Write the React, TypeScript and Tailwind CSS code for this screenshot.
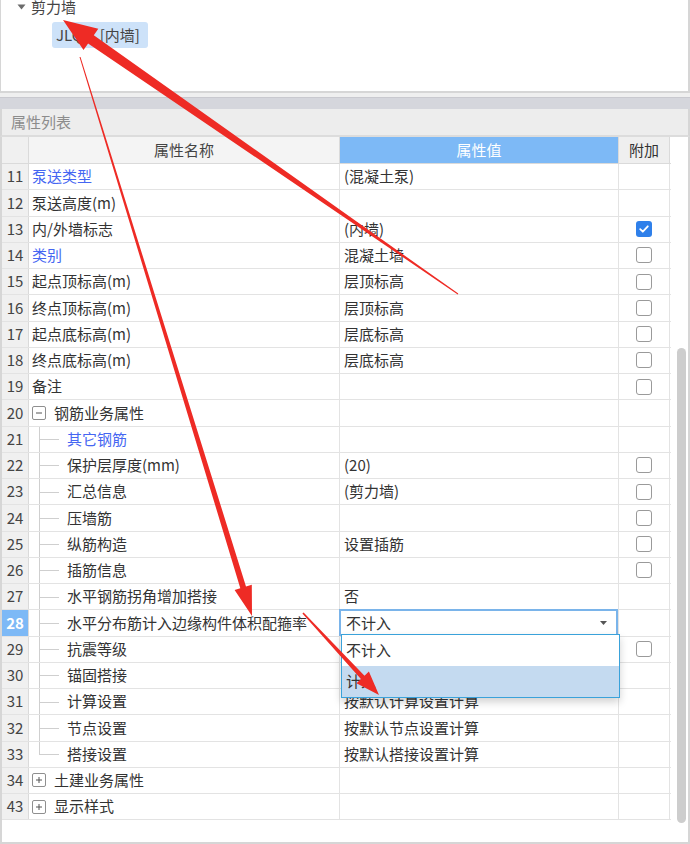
import React from 'react';

type Row = {
  no: number;
  name: string;
  value?: string;
  blue?: boolean;
  check?: 'on' | 'off';
  level?: 'group-open' | 'group-closed' | 'child';
};

const rows: Row[] = [
  { no: 11, name: '泵送类型', value: '(混凝土泵)', blue: true },
  { no: 12, name: '泵送高度(m)' },
  { no: 13, name: '内/外墙标志', value: '(内墙)', check: 'on' },
  { no: 14, name: '类别', value: '混凝土墙', blue: true, check: 'off' },
  { no: 15, name: '起点顶标高(m)', value: '层顶标高', check: 'off' },
  { no: 16, name: '终点顶标高(m)', value: '层顶标高', check: 'off' },
  { no: 17, name: '起点底标高(m)', value: '层底标高', check: 'off' },
  { no: 18, name: '终点底标高(m)', value: '层底标高', check: 'off' },
  { no: 19, name: '备注', check: 'off' },
  { no: 20, name: '钢筋业务属性', level: 'group-open' },
  { no: 21, name: '其它钢筋', blue: true, level: 'child' },
  { no: 22, name: '保护层厚度(mm)', value: '(20)', check: 'off', level: 'child' },
  { no: 23, name: '汇总信息', value: '(剪力墙)', check: 'off', level: 'child' },
  { no: 24, name: '压墙筋', check: 'off', level: 'child' },
  { no: 25, name: '纵筋构造', value: '设置插筋', check: 'off', level: 'child' },
  { no: 26, name: '插筋信息', check: 'off', level: 'child' },
  { no: 27, name: '水平钢筋拐角增加搭接', value: '否', level: 'child' },
  { no: 28, name: '水平分布筋计入边缘构件体积配箍率', level: 'child' },
  { no: 29, name: '抗震等级', check: 'off', level: 'child' },
  { no: 30, name: '锚固搭接', level: 'child' },
  { no: 31, name: '计算设置', value: '按默认计算设置计算', level: 'child' },
  { no: 32, name: '节点设置', value: '按默认节点设置计算', level: 'child' },
  { no: 33, name: '搭接设置', value: '按默认搭接设置计算', level: 'child' },
  { no: 34, name: '土建业务属性', level: 'group-closed' },
  { no: 43, name: '显示样式', level: 'group-closed' },
];

function Checkbox({ on }: { on: boolean }) {
  if (on) {
    return (
      <div className="w-4 h-4 rounded-[3px] bg-[#2f80ea] flex items-center justify-center">
        <svg width="12" height="12" viewBox="0 0 12 12">
          <path d="M2.2 6.2 L4.8 8.7 L9.8 3.3" fill="none" stroke="white" strokeWidth="1.8" strokeLinecap="round" strokeLinejoin="round" />
        </svg>
      </div>
    );
  }
  return <div className="w-4 h-4 rounded-[3px] border-[1.5px] border-[#9a9a9a] bg-white" />;
}

function ToggleBox({ open }: { open: boolean }) {
  return (
    <div className="w-[14px] h-[14px] rounded-[2px] border border-[#8f8f8f] bg-white flex items-center justify-center shrink-0">
      <svg width="8" height="8" viewBox="0 0 8 8">
        <path d="M1 4 H7" stroke="#555" strokeWidth="1" />
        {!open && <path d="M4 1 V7" stroke="#555" strokeWidth="1" />}
      </svg>
    </div>
  );
}

function NameCell({ row, last }: { row: Row; last: boolean }) {
  const color = row.blue ? 'text-[#4566f2]' : 'text-[#333]';
  if (row.level === 'group-open' || row.level === 'group-closed') {
    return (
      <div className="flex items-center h-full pl-[3px] gap-[8px]">
        <ToggleBox open={row.level === 'group-open'} />
        <span className={color}>{row.name}</span>
      </div>
    );
  }
  if (row.level === 'child') {
    return (
      <div className="relative flex items-center h-full pl-[38px]">
        <div className={`absolute left-[10px] top-0 w-px bg-[#cfcfcf] ${last ? 'h-1/2' : 'h-full'}`} />
        <div className="absolute left-[10px] top-1/2 w-[20px] h-px bg-[#cfcfcf]" />
        <span className={`${color} whitespace-nowrap`}>{row.name}</span>
      </div>
    );
  }
  return (
    <div className="flex items-center h-full pl-[3px]">
      <span className={color}>{row.name}</span>
    </div>
  );
}

function arrow(
  tail: [number, number],
  tip: [number, number],
  tailW: number,
  shaftW: number,
  headW: number,
  headL: number,
) {
  const dx = tip[0] - tail[0];
  const dy = tip[1] - tail[1];
  const len = Math.hypot(dx, dy);
  const ux = dx / len;
  const uy = dy / len;
  const nx = -uy;
  const ny = ux;
  const bx = tip[0] - ux * headL;
  const by = tip[1] - uy * headL;
  const pts = [
    [tail[0] + (nx * tailW) / 2, tail[1] + (ny * tailW) / 2],
    [bx + (nx * shaftW) / 2, by + (ny * shaftW) / 2],
    [bx + (nx * headW) / 2, by + (ny * headW) / 2],
    [tip[0], tip[1]],
    [bx - (nx * headW) / 2, by - (ny * headW) / 2],
    [bx - (nx * shaftW) / 2, by - (ny * shaftW) / 2],
    [tail[0] - (nx * tailW) / 2, tail[1] - (ny * tailW) / 2],
  ];
  return pts.map((p) => `${p[0].toFixed(1)},${p[1].toFixed(1)}`).join(' ');
}

export default function App() {
  return (
    <div className="relative w-[690px] h-[844px] overflow-hidden bg-[#efefef] text-[15px] font-['Microsoft_YaHei','Noto_Sans_CJK_SC',sans-serif]">
      {/* component tree */}
      <div className="h-[93px] bg-white border-l border-r-2 border-b-2 border-[#d6d6d6] overflow-hidden">
        <div className="flex items-center h-5 mt-[-3px] pl-[16px] gap-[5px]">
          <svg width="9" height="6" viewBox="0 0 9 6">
            <path d="M0.5 0.5 H8.5 L4.5 5.5 Z" fill="#6b6b6b" />
          </svg>
          <span className="text-[#444]">剪力墙</span>
        </div>
        <div className="ml-[51px] mt-[5px] w-[96px] h-[26px] rounded-[3px] bg-[#cde2f9] flex items-center pl-[4px] text-[#444] whitespace-nowrap">
          JLQ-1 [内墙]
        </div>
      </div>

      <div className="h-[4px]" />
      <div className="h-[12px] bg-[#d5d6dc] border-t border-[#c9c9cf]" />

      {/* property list */}
      <div className="h-[28px] bg-[#ededed] border-l-2 border-r-2 border-[#d6d6d6] border-b-2 border-b-[#dcdcdc] flex items-center pl-[9px] text-[#8c8c8c]">
        属性列表
      </div>

      <div className="relative h-[707px] bg-white border-l-2 border-r-2 border-b-2 border-[#d6d6d6]">
        <div className="flex">
          <div className="w-[669px]">
            {/* header */}
            <div className="flex h-[27px] border-b border-[#dadada]">
              <div className="w-[27px] bg-[#f0f0f0] border-r border-[#dadada]" />
              <div className="w-[311px] bg-[#f4f4f4] border-r border-[#dadada] flex items-center justify-center text-[#444]">属性名称</div>
              <div className="w-[279px] bg-[#7db9f6] border-r border-[#dadada] flex items-center justify-center text-white">属性值</div>
              <div className="w-[51px] bg-[#efefef] border-r border-[#dadada] flex items-center justify-center text-[#333]">附加</div>
            </div>
            {rows.map((row) => {
              const active = row.no === 28;
              return (
                <div key={row.no} className="flex h-[26.25px] border-b border-[#e3e3e3]">
                  <div
                    className={`w-[27px] border-r border-[#dadada] flex items-center justify-center ${
                      active ? 'bg-[#7db9f6] text-white font-bold' : 'bg-[#f0f0f0] text-[#444]'
                    }`}
                  >
                    {row.no}
                  </div>
                  <div className="w-[311px] border-r border-[#e3e3e3]">
                    <NameCell row={row} last={row.no === 33} />
                  </div>
                  <div className="relative w-[279px] border-r border-[#e3e3e3] flex items-center pl-[4px] text-[#333]">
                    {row.value}
                    {active && (
                      <div className="absolute left-[-1px] top-[-1px] w-[279px] h-[27px] border-2 border-[#7ab4ea] bg-white flex items-center justify-between pl-[5px] pr-[9px] z-10">
                        <span>不计入</span>
                        <svg width="7" height="4" viewBox="0 0 7 4">
                          <path d="M0 0 H7 L3.5 4 Z" fill="#555" />
                        </svg>
                      </div>
                    )}
                  </div>
                  <div className="w-[51px] border-r border-[#e3e3e3] flex items-center justify-center">
                    {row.check && <Checkbox on={row.check === 'on'} />}
                  </div>
                </div>
              );
            })}
          </div>
          <div className="w-[17px] relative">
            <div className="absolute left-[6px] top-[211px] w-[9px] h-[475px] rounded-full bg-[#cdcdcd]" />
          </div>
        </div>

        {/* dropdown list */}
        <div className="absolute left-[339px] top-[497px] w-[279px] border border-[#3aa2da] bg-white shadow-[0_4px_8px_rgba(0,0,0,0.18)] z-20 text-[#333]">
          <div className="h-[31px] flex items-center pl-[4px]">不计入</div>
          <div className="h-[31px] flex items-center pl-[4px] bg-[#c4daf0]">计入</div>
        </div>
      </div>

      {/* annotation arrows */}
      <svg className="absolute inset-0 pointer-events-none z-30" width="690" height="844" viewBox="0 0 690 844">
        <polygon points={arrow([458, 294], [63, 20], 1, 10, 26, 34)} fill="#ee2b25" />
        <polygon points={arrow([80, 57], [252, 616], 1, 6, 18, 30)} fill="#ee2b25" />
        <polygon points={arrow([303, 613], [379, 695], 1.5, 5, 17, 24)} fill="#ee2b25" />
      </svg>
    </div>
  );
}
